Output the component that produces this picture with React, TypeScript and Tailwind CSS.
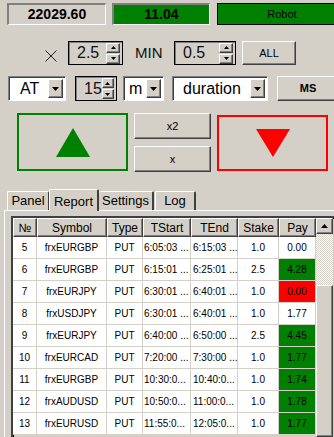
import React from "react";

type Trade = {
    n: number;
    symbol: string;
    start: string;
    end: string;
    stake: string;
    pay: string;
    tone: "none" | "win" | "loss";
};

const trades: Trade[] = [
    { n: 5, symbol: "frxEURGBP", start: "6:05:03 ...", end: "6:15:03 ...", stake: "1.0", pay: "0.00", tone: "none" },
    { n: 6, symbol: "frxEURGBP", start: "6:15:01 ...", end: "6:25:01 ...", stake: "2.5", pay: "4.28", tone: "win" },
    { n: 7, symbol: "frxEURJPY", start: "6:30:01 ...", end: "6:40:01 ...", stake: "1.0", pay: "0.00", tone: "loss" },
    { n: 8, symbol: "frxUSDJPY", start: "6:30:01 ...", end: "6:40:01 ...", stake: "1.0", pay: "1.77", tone: "none" },
    { n: 9, symbol: "frxEURJPY", start: "6:40:00 ...", end: "6:50:00 ...", stake: "2.5", pay: "4.45", tone: "win" },
    { n: 10, symbol: "frxEURCAD", start: "7:20:00 ...", end: "7:30:00 ...", stake: "1.0", pay: "1.77", tone: "win" },
    { n: 11, symbol: "frxEURGBP", start: "10:30:0...", end: "10:40:0...", stake: "1.0", pay: "1.74", tone: "win" },
    { n: 12, symbol: "frxAUDUSD", start: "10:50:0...", end: "11:00:0...", stake: "1.0", pay: "1.78", tone: "win" },
    { n: 13, symbol: "frxEURUSD", start: "11:55:0...", end: "12:05:0...", stake: "1.0", pay: "1.77", tone: "win" },
];

// classic win98 raised edge
const raised = "border border-t-white border-l-white border-r-[#404040] border-b-[#404040] shadow-[inset_-1px_-1px_0_#808080] bg-[#d4d0c8]";

function Arrow({ dir, size = 7 }: { dir: "up" | "down"; size?: number }) {
    const h = Math.ceil(size / 2);
    return (
        <svg width={size} height={h} viewBox={`0 0 ${size} ${h}`}>
            {dir === "up"
                ? <polygon points={`${size / 2},0 ${size},${h} 0,${h}`} fill="#000" />
                : <polygon points={`0,0 ${size},0 ${size / 2},${h}`} fill="#000" />}
        </svg>
    );
}

function Spinner({ value, width }: { value: string; width: string }) {
    return (
        <div className={`${width} h-full flex items-center border border-black bg-[#d4d0c8] shadow-[inset_1px_1px_0_#808080]`}>
            <span className="flex-1 pl-[8px] text-[16px] text-[#111] leading-none">{value}</span>
            <div className="flex flex-col gap-[1px] mr-[2px] w-[14px]">
                <div className={`${raised} h-[10px] flex items-center justify-center`}><Arrow dir="up" size={5} /></div>
                <div className={`${raised} h-[10px] flex items-center justify-center`}><Arrow dir="down" size={5} /></div>
            </div>
        </div>
    );
}

function Combo({ value, width, pad }: { value: string; width: string; pad: string }) {
    return (
        <div className={`${width} h-full flex items-center bg-white border border-t-[#808080] border-l-[#808080] border-r-white border-b-white shadow-[inset_1px_1px_0_#404040]`}>
            <span className={`flex-1 ${pad} text-[16px] leading-none`}>{value}</span>
            <div className={`${raised} w-[15px] h-[19px] mr-[2px] flex items-center justify-center`}>
                <Arrow dir="down" size={7} />
            </div>
        </div>
    );
}

const cols = ["w-[24px]", "w-[70px]", "w-[36px]", "w-[48px]", "w-[47px]", "w-[41px]", "w-[37px]"];
const heads = ["№", "Symbol", "Type", "TStart", "TEnd", "Stake", "Pay"];

export default function App() {
    return (
        <div className="w-[334px] h-[437px] overflow-hidden bg-[#d4d0c8] text-black font-['Liberation_Sans',Arial,sans-serif]">
            {/* status row */}
            <div className="flex pt-[3px] pl-[7px] h-[25px]">
                <div className="w-[99px] h-[22px] shrink-0 flex items-center justify-center border-t-2 border-l-2 border-t-[#808080] border-l-[#808080] border-b border-r border-b-white border-r-white text-[14px] font-bold">
                    22029.60
                </div>
                <div className="ml-[6px] w-[98px] h-[22px] shrink-0 flex items-center justify-center bg-[#008000] border-t-2 border-l-2 border-t-[#808080] border-l-[#808080] border-b border-r border-b-white border-r-white text-[14px] font-bold">
                    11.04
                </div>
                <div className="ml-[7px] w-[130px] h-[22px] shrink-0 flex items-center justify-center bg-[#008000] border border-black text-[11px]">
                    Robot
                </div>
            </div>

            {/* multiplier row */}
            <div className="flex items-center mt-[16px] h-[24px]">
                <svg className="ml-[45px] mt-[6px] shrink-0" width="12" height="12" viewBox="0 0 12 12">
                    <path d="M0.5 0.5L11.5 11.5M11.5 0.5L0.5 11.5" stroke="#222" strokeWidth="1" />
                </svg>
                <div className="ml-[11px] h-full"><Spinner value="2.5" width="w-[55px]" /></div>
                <span className="ml-[12px] w-[39px] text-[15px] text-[#111]">MIN</span>
                <div className="h-full"><Spinner value="0.5" width="w-[62px]" /></div>
                <button className={`${raised} ml-[6px] w-[54px] h-full text-[11px]`}>ALL</button>
            </div>

            {/* duration row */}
            <div className="flex items-center mt-[11px] h-[25px]">
                <div className="ml-[8px] h-full"><Combo value="AT" width="w-[58px]" pad="pl-[11px]" /></div>
                <div className="ml-[9px] h-full"><Spinner value="15" width="w-[42px]" /></div>
                <div className="ml-[6px] h-full"><Combo value="m" width="w-[41px]" pad="pl-[5px]" /></div>
                <div className="ml-[8px] h-full"><Combo value="duration" width="w-[96px]" pad="pl-[10px]" /></div>
                <button className={`${raised} ml-[9px] w-[62px] shrink-0 h-full text-[11px] font-bold`}>MS</button>
            </div>

            {/* call / put */}
            <div className="flex mt-[12px] h-[59px]">
                <button className="ml-[17px] w-[111px] h-[58px] shrink-0 border-2 border-[#008000] flex items-center justify-center">
                    <svg width="34" height="29" viewBox="0 0 34 29"><polygon points="17,0 34,29 0,29" fill="#008000" /></svg>
                </button>
                <div className="ml-[6px] w-[77px] shrink-0 flex flex-col gap-[7px]">
                    <button className={`${raised} h-[26px] text-[11px]`}>x2</button>
                    <button className={`${raised} h-[26px] text-[11px]`}>x</button>
                </div>
                <button className="ml-[6px] mt-[2px] w-[111px] h-[56px] shrink-0 border-2 border-[#ff0000] flex items-center justify-center">
                    <svg width="34" height="28" viewBox="0 0 34 28"><polygon points="0,0 34,0 17,28" fill="#ff0000" /></svg>
                </button>
            </div>

            {/* tabs */}
            <div className="flex items-end mt-[16px] h-[22px] pl-[7px]">
                <div className="w-[42px] h-[19px] border-t border-l border-white border-r border-r-[#404040] rounded-t-[2px] text-[13px] flex items-center justify-center">Panel</div>
                <div className="w-[50px] h-[22px] -mb-px bg-[#d4d0c8] border-t border-l border-white border-r-2 border-r-[#404040] rounded-t-[2px] text-[13px] flex items-start pt-[2px] justify-center relative z-10">Report</div>
                <div className="w-[55px] h-[19px] border-t border-white border-r-2 border-r-[#404040] rounded-t-[2px] text-[13px] flex items-center justify-center">Settings</div>
                <div className="ml-[1px] w-[41px] h-[19px] border-t border-l border-white border-r-2 border-r-[#404040] rounded-t-[2px] text-[13px] flex items-center justify-center">Log</div>
            </div>

            {/* panel */}
            <div className="ml-[4px] border-t border-l border-white pt-[5px] pl-[6px] h-[230px]">
                <div className="flex border-t-2 border-l-2 border-t-[#404040] border-l-[#404040] shadow-[inset_1px_1px_0_#000]">
                    <div className="flex flex-col">
                        <div className="flex h-[19px]">
                            {heads.map((h, i) => (
                                <div key={h} className={`${cols[i]} ${raised} flex items-center justify-center text-[12px]`}>{h}</div>
                            ))}
                        </div>
                        {trades.map((t) => (
                            <div key={t.n} className="flex h-[22px] bg-white text-[10px]">
                                <div className={`${cols[0]} border-r border-b border-[#d4d0c8] flex items-center justify-center`}>{t.n}</div>
                                <div className={`${cols[1]} border-r border-b border-[#d4d0c8] flex items-center justify-center`}>{t.symbol}</div>
                                <div className={`${cols[2]} border-r border-b border-[#d4d0c8] flex items-center justify-center`}>PUT</div>
                                <div className={`${cols[3]} border-r border-b border-[#d4d0c8] flex items-center pl-[1px] whitespace-nowrap overflow-hidden`}>{t.start}</div>
                                <div className={`${cols[4]} border-r border-b border-[#d4d0c8] flex items-center pl-[2px] whitespace-nowrap overflow-hidden`}>{t.end}</div>
                                <div className={`${cols[5]} border-r border-b border-[#d4d0c8] flex items-center justify-center`}>{t.stake}</div>
                                <div
                                    className={`${cols[6]} border-r border-b border-[#d4d0c8] flex items-center justify-center ${
                                        t.tone === "win" ? "bg-[#008000]" : t.tone === "loss" ? "bg-[#ff0000]" : "bg-white"
                                    }`}
                                >
                                    {t.pay}
                                </div>
                            </div>
                        ))}
                    </div>
                    {/* scrollbar */}
                    <div className="w-[17px] shrink-0 flex flex-col">
                        <div className={`${raised} h-[16px] flex items-center justify-center`}><Arrow dir="up" size={7} /></div>
                        <div className="h-[51px] bg-[repeating-conic-gradient(#ffffff_0%_25%,#d4d0c8_0%_50%)] bg-[length:2px_2px]"></div>
                        <div className={`${raised} h-[152px]`}></div>
                    </div>
                </div>
            </div>
        </div>
    );
}
